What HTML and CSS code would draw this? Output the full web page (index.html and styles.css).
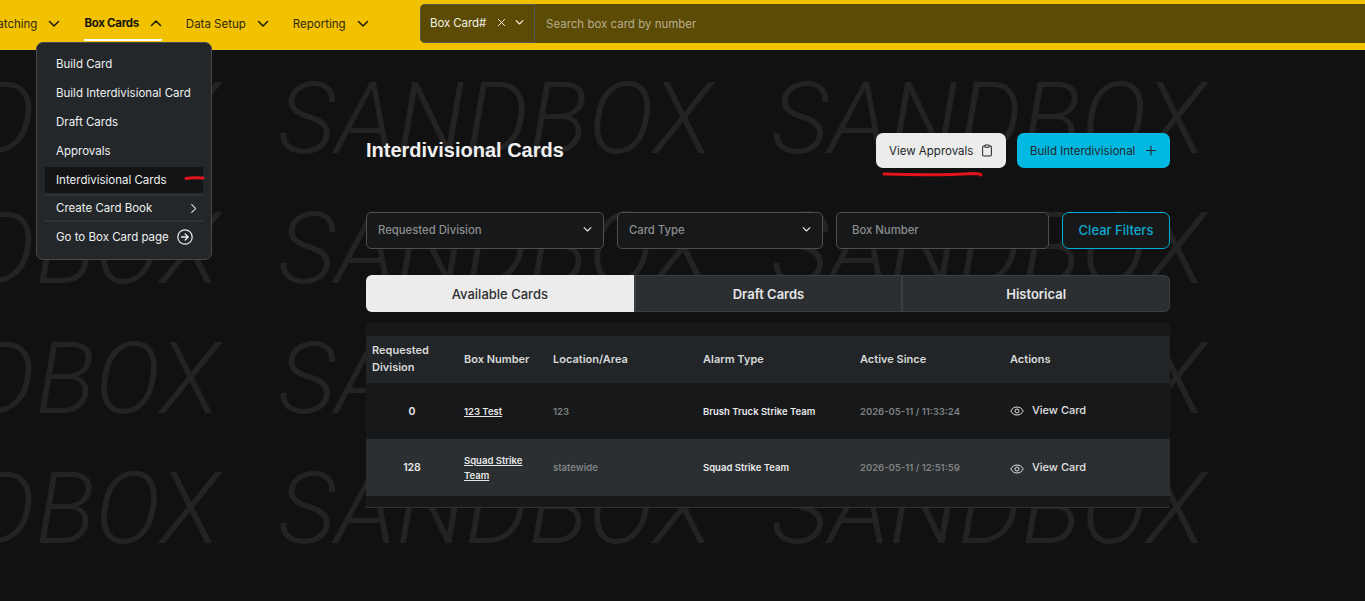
FILE: index.html
```html
<!DOCTYPE html>
<html lang="en">
  <head>
    <meta charset="UTF-8" />
    <meta name="viewport" content="width=device-width, initial-scale=1.0" />
    <title>Interdivisional Cards</title>
    <link rel="stylesheet" href="styles.css">
  </head>
  <body>
    <svg class="icon-defs" width="0" height="0">
      <symbol id="chev" viewBox="0 0 12 12"><path d="M1.500 3.500 6 8l4.500-4.500" fill="none" stroke="currentColor" stroke-width="1.500" stroke-linecap="round" stroke-linejoin="round"/></symbol>
      <symbol id="eye" viewBox="0 0 14 10"><path d="M.8 5C2.200 2.300 4.400 1 7 1s4.800 1.300 6.200 4C11.800 7.700 9.600 9 7 9S2.200 7.700.8 5Z" fill="none" stroke="currentColor" stroke-width="1"/><circle cx="7" cy="5" r="2" fill="none" stroke="currentColor" stroke-width="1"/></symbol>
    </svg>

    <div class="watermark" aria-hidden="true">
      <div class="wm-row"><span>SANDBOX</span><span>SANDBOX</span><span>SANDBOX</span></div>
      <div class="wm-row"><span>SANDBOX</span><span>SANDBOX</span><span>SANDBOX</span></div>
      <div class="wm-row"><span>SANDBOX</span><span>SANDBOX</span><span>SANDBOX</span></div>
      <div class="wm-row"><span>SANDBOX</span><span>SANDBOX</span><span>SANDBOX</span></div>
    </div>

    <header class="topbar">
      <nav class="nav">
        <a class="nav-item">Dispatching <svg class="nav-chev"><use href="#chev"/></svg></a>
        <a class="nav-item active">Box Cards <svg class="nav-chev flip"><use href="#chev"/></svg></a>
        <a class="nav-item">Data Setup <svg class="nav-chev"><use href="#chev"/></svg></a>
        <a class="nav-item">Reporting <svg class="nav-chev"><use href="#chev"/></svg></a>
      </nav>
      <div class="search">
        <div class="search-type">
          <span>Box Card#</span>
          <svg class="x-icon" viewBox="0 0 10 10"><path d="M1.500 1.500l7 7M8.500 1.500l-7 7" stroke="currentColor" stroke-width="1.100" stroke-linecap="round"/></svg>
          <svg class="small-chev"><use href="#chev"/></svg>
        </div>
        <div class="search-input">Search box card by number</div>
      </div>
    </header>

    <div class="menu">
      <a class="menu-item">Build Card</a>
      <a class="menu-item">Build Interdivisional Card</a>
      <a class="menu-item">Draft Cards</a>
      <a class="menu-item">Approvals</a>
      <a class="menu-item current">Interdivisional Cards</a>
      <a class="menu-item split">Create Card Book
        <svg class="menu-arrow" viewBox="0 0 8 12"><path d="M2 1.500 6.500 6 2 10.500" fill="none" stroke="currentColor" stroke-width="1.200" stroke-linecap="round" stroke-linejoin="round"/></svg>
      </a>
      <a class="menu-item goto">Go to Box Card page
        <svg class="goto-icon" viewBox="0 0 16 16"><circle cx="8" cy="8" r="7.200" fill="none" stroke="currentColor" stroke-width="1.200"/><path d="M4.500 8h6.500M8.200 5l3 3-3 3" fill="none" stroke="currentColor" stroke-width="1.300" stroke-linecap="round" stroke-linejoin="round"/></svg>
      </a>
    </div>

    <main class="content">
      <div class="title-row">
        <h1>Interdivisional Cards</h1>
        <div class="title-actions">
          <button class="btn btn-light">View Approvals
            <svg class="btn-icon" viewBox="0 0 12 14"><path d="M3.500 2.200H2.300a1 1 0 0 0-1 1v8.600a1 1 0 0 0 1 1h7.400a1 1 0 0 0 1-1V3.200a1 1 0 0 0-1-1H8.500" fill="none" stroke="currentColor" stroke-width="1.100"/><rect x="3.700" y="1" width="4.600" height="2.400" rx=".5" fill="none" stroke="currentColor" stroke-width="1.100"/></svg>
          </button>
          <button class="btn btn-blue">Build Interdivisional
            <svg class="btn-icon" viewBox="0 0 12 12"><path d="M6 1.500v9M1.500 6h9" stroke="currentColor" stroke-width="1.100" stroke-linecap="round"/></svg>
          </button>
        </div>
      </div>

      <div class="filters">
        <div class="field f-div">Requested Division <svg class="small-chev"><use href="#chev"/></svg></div>
        <div class="field f-type">Card Type <svg class="small-chev"><use href="#chev"/></svg></div>
        <div class="field f-box">Box Number</div>
        <button class="clear">Clear Filters</button>
      </div>

      <div class="tabs">
        <div class="tab selected">Available Cards</div>
        <div class="tab">Draft Cards</div>
        <div class="tab">Historical</div>
      </div>

      <div class="table-wrap">
        <table class="cards">
          <colgroup>
            <col class="c1"><col class="c2"><col class="c3"><col class="c4"><col class="c5"><col class="c6">
          </colgroup>
          <thead>
            <tr>
              <th>Requested Division</th>
              <th>Box Number</th>
              <th>Location/Area</th>
              <th>Alarm Type</th>
              <th>Active Since</th>
              <th>Actions</th>
            </tr>
          </thead>
          <tbody>
            <tr class="row-1">
              <td class="num">0</td>
              <td><a class="box-link">123 Test</a></td>
              <td class="dim">123</td>
              <td class="alarm">Brush Truck Strike Team</td>
              <td class="dim">2026-05-11 / 11:33:24</td>
              <td><a class="view"><svg class="eye"><use href="#eye"/></svg>View Card</a></td>
            </tr>
            <tr class="row-2">
              <td class="num">128</td>
              <td><a class="box-link">Squad Strike Team</a></td>
              <td class="dim">statewide</td>
              <td class="alarm">Squad Strike Team</td>
              <td class="dim">2026-05-11 / 12:51:59</td>
              <td><a class="view"><svg class="eye"><use href="#eye"/></svg>View Card</a></td>
            </tr>
          </tbody>
        </table>
      </div>
    </main>

    <!-- red pen marks on the screenshot -->
    <svg class="pen" width="1365" height="601">
      <path d="M186 178.500c5-1 11-1 17-.5" fill="none" stroke="#e3141b" stroke-width="3" stroke-linecap="round"/>
      <path d="M884 174c30 1 65 1 90-.5 3 0 6 .5 7 1.500" fill="none" stroke="#e3141b" stroke-width="3" stroke-linecap="round"/>
    </svg>
  </body>
</html>
```

FILE: styles.css
```css
* {
  box-sizing: border-box;
}

html,
body {
  height: 100%;
}

body {
  margin: 0;
  height: 601px;
  overflow: hidden;
  position: relative;
  background-color: #111112;
  color: #e9e9e9;
  font-family: Inter, "Noto Sans", sans-serif;
  font-size: 11.500px;
}

.icon-defs {
  position: absolute;
}

/* watermark */
.watermark {
  position: absolute;
  top: 64px;
  left: -215px;
  width: 1800px;
  display: flex;
  flex-direction: column;
  gap: 20px;
  pointer-events: none;
}

.wm-row {
  display: flex;
  gap: 59px;
  height: 110px;
  line-height: 110px;
  font-family: Roboto, sans-serif;
  font-size: 100px;
  font-weight: 300;
  font-style: italic;
  color: #232324;
  white-space: nowrap;
}

/* top bar */
.topbar {
  position: relative;
  height: 50px;
  background-color: #f2c100;
  display: flex;
  overflow: hidden;
}

.nav {
  display: flex;
  margin-left: -27px;
  width: 447px;
  flex-shrink: 0;
}

.nav-item {
  height: 41px;
  display: flex;
  align-items: center;
  gap: 11px;
  margin-right: 24px;
  color: #2e2a10;
  font-size: 11.500px;
  white-space: nowrap;
  padding-top: 7px;
}

.nav-item.active {
  color: #16140a;
  font-weight: 700;
  letter-spacing: -.3px;
  border-bottom: 2px solid #fff;
  border-radius: 0 0 1px 1px;
}

.nav-chev {
  width: 12px;
  height: 12px;
  color: #1d1a08;
}

.flip {
  transform: rotate(180deg);
}

.search {
  flex: 1;
  height: 39px;
  margin-top: 4px;
  background-color: #5c4b04;
  display: flex;
  border-radius: 5px 0 0 5px;
}

.search-type {
  width: 115px;
  display: flex;
  align-items: center;
  padding: 0 0 2px 9px;
  color: #f2f0e6;
  letter-spacing: -.1px;
  border: 1px solid #55565a;
  border-radius: 5px 0 0 5px;
}

.x-icon {
  width: 9px;
  height: 9px;
  margin-left: auto;
  margin-right: 9px;
}

.search-type .small-chev {
  margin-right: 10px;
}

.small-chev {
  width: 9px;
  height: 9px;
}

.search-input {
  padding-left: 11px;
  display: flex;
  align-items: center;
  color: #b5ad8f;
}

/* dropdown */
.menu {
  position: absolute;
  top: 42px;
  left: 36px;
  width: 176px;
  height: 218px;
  padding: 6px 8px 0;
  background-color: #24272a;
  border: 1px solid #46494c;
  border-radius: 7px;
}

.menu-item {
  display: flex;
  align-items: center;
  height: 29px;
  padding-left: 11px;
  color: #eef0f0;
  white-space: nowrap;
}

.menu-item.current {
  background-color: #131416;
  height: 26px;
  margin-top: 2px;
  margin-bottom: 1px;
}

.menu-item.split {
  height: 28px;
  border-top: 2px solid #303336;
  border-bottom: 2px solid #303336;
  justify-content: space-between;
  padding-right: 6px;
}

.menu-item.goto {
  height: 30px;
  gap: 8px;
}

.menu-arrow {
  width: 7px;
  height: 11px;
}

.goto-icon {
  width: 16px;
  height: 16px;
}

/* main column */
.content {
  position: relative;
  width: 804px;
  margin-left: 366px;
}

.title-row {
  display: flex;
  align-items: center;
  justify-content: space-between;
  padding-top: 83px;
}

h1 {
  margin: 0;
  font-size: 20px;
  font-weight: 700;
  color: #f0f0f0;
  font-family: "Liberation Sans", sans-serif;
}

.title-actions {
  display: flex;
  gap: 11px;
}

.btn {
  height: 35px;
  border: 0;
  border-radius: 7px;
  padding: 0 13px;
  display: flex;
  align-items: center;
  justify-content: space-between;
  font: inherit;
  white-space: nowrap;
  color: #24272a;
}

.btn-light {
  width: 130px;
  background-color: #ececec;
}

.btn-blue {
  width: 153px;
  background-color: #00b9e2;
}

.btn-icon {
  width: 12px;
  height: 13px;
}

.filters {
  display: flex;
  gap: 13px;
  margin-top: 44px;
}

.field {
  height: 37px;
  border: 1px solid #4d4f4c;
  border-radius: 5px;
  background-color: #16181a;
  color: #8c8d8d;
  font-size: 11.300px;
  font-weight: 500;
  display: flex;
  align-items: center;
  justify-content: space-between;
  padding: 0 11px 2px 11px;
}

.field .small-chev {
  color: #e5e5e5;
}

.f-div {
  width: 238px;
}

.f-type {
  width: 206px;
}

.f-box {
  width: 213px;
  padding-left: 15px;
}

.clear {
  width: 108px;
  height: 37px;
  padding-bottom: 2px;
  background-color: #16181a;
  border: 1px solid #00aed6;
  border-radius: 7px;
  color: #0fa9cf;
  font: inherit;
  font-size: 13px;
  font-weight: 500;
}

.tabs {
  display: grid;
  grid-template-columns: repeat(3, 1fr);
  height: 37px;
  margin-top: 26px;
  background-color: #2b2f32;
  border: 1px solid #3c3f42;
  border-left: 0;
  border-radius: 6px;
}

.tab {
  display: flex;
  align-items: center;
  justify-content: center;
  font-size: 13px;
  font-weight: 600;
  color: #e6e6e6;
  border-left: 2px solid #3c3f42;
}

.tab.selected {
  background-color: #ececec;
  color: #2c2f31;
  font-weight: 500;
  border: 0;
  margin: -1px 0;
  border-radius: 6px 0 0 6px;
}

/* table */
.table-wrap {
  margin-top: 11px;
  padding: 13px 0 11px;
  background-color: #16181a;
  border-bottom: 1px solid #313335;
}

.cards {
  width: 804px;
  table-layout: fixed;
  border-collapse: separate;
  border-spacing: 0;
}

.c1 { width: 92px; }
.c2 { width: 89px; }
.c3 { width: 150px; }
.c4 { width: 157px; }
.c5 { width: 150px; }
.c6 { width: 166px; }

th {
  height: 47px;
  padding: 0 6px;
  text-align: left;
  font-size: 11px;
  font-weight: 600;
  line-height: 17px;
  color: #d8d9d9;
  background-color: #212527;
}

th:first-child {
  padding-bottom: 2px;
}

td {
  padding: 0 6px;
  font-size: 9.500px;
  font-weight: 600;
  line-height: 15px;
  color: #e6e6e6;
}

.row-1 td {
  height: 56px;
}

.row-2 td {
  height: 57px;
  background-color: #2b2f32;
}

td.num {
  text-align: center;
  font-size: 10.500px;
}

.box-link {
  text-decoration: underline;
}

td.dim {
  color: #7f8182;
}

td.alarm {
  color: #e9e9e9;
}

.view {
  display: flex;
  align-items: center;
  gap: 8px;
  font-size: 11px;
  font-weight: 500;
  color: #e0e0e0;
}

.eye {
  width: 14px;
  height: 10px;
  margin-top: 2px;
}

.row-1 .view {
  margin-top: -2px;
}

.pen {
  position: absolute;
  top: 0;
  left: 0;
  pointer-events: none;
}
```
